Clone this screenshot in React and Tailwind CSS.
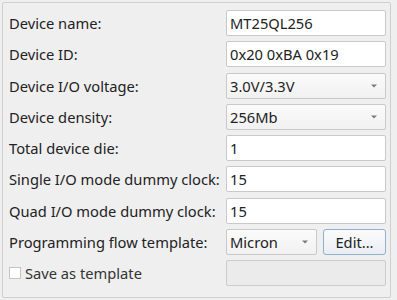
import React from "react";

const font = { fontFamily: '"Noto Sans", "Open Sans", sans-serif' };

function Field({ value }) {
  return (
    <div className="h-[26px] bg-white border border-[#c9c9c9] rounded-[2px] flex items-center pl-[3px] text-[14.7px] text-[#222]">
      {value}
    </div>
  );
}

function Arrow() {
  return (
    <svg width="6" height="4" viewBox="0 0 6 4" className="shrink-0">
      <path d="M0 0.5 L6 0.5 L3 3.5 Z" fill="#7a7a7a" />
    </svg>
  );
}

function Combo({ value, className = "" }) {
  return (
    <div
      className={
        "h-[26px] border border-[#c9c9c9] rounded-[2px] flex items-center justify-between pl-[3px] pr-[8px] text-[14.7px] text-[#222] bg-gradient-to-b from-[#fbfbfb] to-[#f1f1f1] " +
        className
      }
    >
      <span>{value}</span>
      <Arrow />
    </div>
  );
}

function Label({ children }) {
  return <div className="h-[26px] flex items-center text-[14.7px] text-[#222] whitespace-nowrap">{children}</div>;
}

export default function App() {
  return (
    <div className="w-[397px] h-[300px] bg-[#efefef] pt-[2px] pl-[2px]" style={font}>
      <div className="w-[389px] h-[296px] border border-[#cfcfcf] rounded-[2px] pl-[6px] pr-[6px] pt-[7px]">
        <div className="grid grid-cols-[217px_160px] gap-y-[5.3px]">
          <Label>Device name:</Label>
          <Field value="MT25QL256" />
          <Label>Device ID:</Label>
          <Field value="0x20 0xBA 0x19" />
          <Label>Device I/O voltage:</Label>
          <Combo value="3.0V/3.3V" />
          <Label>Device density:</Label>
          <Combo value="256Mb" />
          <Label>Total device die:</Label>
          <Field value="1" />
          <Label>Single I/O mode dummy clock:</Label>
          <Field value="15" />
          <Label>Quad I/O mode dummy clock:</Label>
          <Field value="15" />
          <Label>Programming flow template:</Label>
          <div className="flex gap-[6px]">
            <Combo value="Micron" className="w-[91px]" />
            <button className="flex-1 h-[26px] border border-[#8fb0cf] rounded-[3px] bg-gradient-to-b from-[#fbfbfb] to-[#e9eef3] text-[14.7px] text-[#222] flex items-center justify-center">
              Edit...
            </button>
          </div>
          <div className="h-[26px] flex items-center gap-[4px] text-[14.7px] text-[#333]">
            <div className="w-[12px] h-[12px] bg-white border border-[#c4c4c4]" />
            <span>Save as template</span>
          </div>
          <div className="h-[26px] border border-[#cccccc] rounded-[2px] bg-[#ebebeb]" />
        </div>
      </div>
    </div>
  );
}
